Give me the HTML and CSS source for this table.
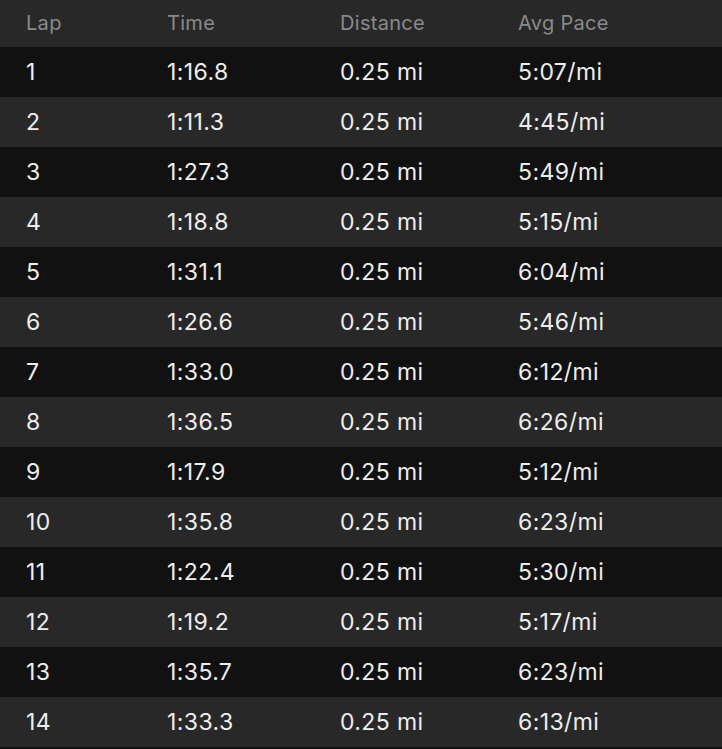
FILE: index.html
```html
<!DOCTYPE html>
<html>
<head>
<meta charset="utf-8">
<link rel="stylesheet" href="styles.css">
</head>
<body>
<div class="table">
  <div class="row head"><span>Lap</span><span>Time</span><span>Distance</span><span>Avg Pace</span></div>
  <div class="row odd"><span>1</span><span>1:16.8</span><span>0.25 mi</span><span>5:07/mi</span></div>
  <div class="row even"><span>2</span><span>1:11.3</span><span>0.25 mi</span><span>4:45/mi</span></div>
  <div class="row odd"><span>3</span><span>1:27.3</span><span>0.25 mi</span><span>5:49/mi</span></div>
  <div class="row even"><span>4</span><span>1:18.8</span><span>0.25 mi</span><span>5:15/mi</span></div>
  <div class="row odd"><span>5</span><span>1:31.1</span><span>0.25 mi</span><span>6:04/mi</span></div>
  <div class="row even"><span>6</span><span>1:26.6</span><span>0.25 mi</span><span>5:46/mi</span></div>
  <div class="row odd"><span>7</span><span>1:33.0</span><span>0.25 mi</span><span>6:12/mi</span></div>
  <div class="row even"><span>8</span><span>1:36.5</span><span>0.25 mi</span><span>6:26/mi</span></div>
  <div class="row odd"><span>9</span><span>1:17.9</span><span>0.25 mi</span><span>5:12/mi</span></div>
  <div class="row even"><span>10</span><span>1:35.8</span><span>0.25 mi</span><span>6:23/mi</span></div>
  <div class="row odd"><span>11</span><span>1:22.4</span><span>0.25 mi</span><span>5:30/mi</span></div>
  <div class="row even"><span>12</span><span>1:19.2</span><span>0.25 mi</span><span>5:17/mi</span></div>
  <div class="row odd"><span>13</span><span>1:35.7</span><span>0.25 mi</span><span>6:23/mi</span></div>
  <div class="row even"><span>14</span><span>1:33.3</span><span>0.25 mi</span><span>6:13/mi</span></div>
</div>
</body>
</html>
```
FILE: styles.css
```css
html, body {
  margin: 0;
  padding: 0;
  background: #111111;
}
body {
  font-family: Inter, "Liberation Sans", sans-serif;
  width: 722px;
  height: 749px;
  overflow: hidden;
}
.table {
  display: flex;
  flex-direction: column;
}
.row {
  display: grid;
  grid-template-columns: 141px 173px 178px 1fr;
  align-items: center;
  padding-left: 26px;
  height: 50px;
  color: #eeeeee;
  font-size: 23px;
  letter-spacing: 0.4px;
}
.row.head {
  height: 47px;
  background: #282828;
  color: #8a8a8a;
  font-size: 20px;
  letter-spacing: 0.3px;
  padding-bottom: 2px;
  box-sizing: border-box;
}
.row.odd {
  background: #111111;
}
.row.even {
  background: #282828;
}
```
